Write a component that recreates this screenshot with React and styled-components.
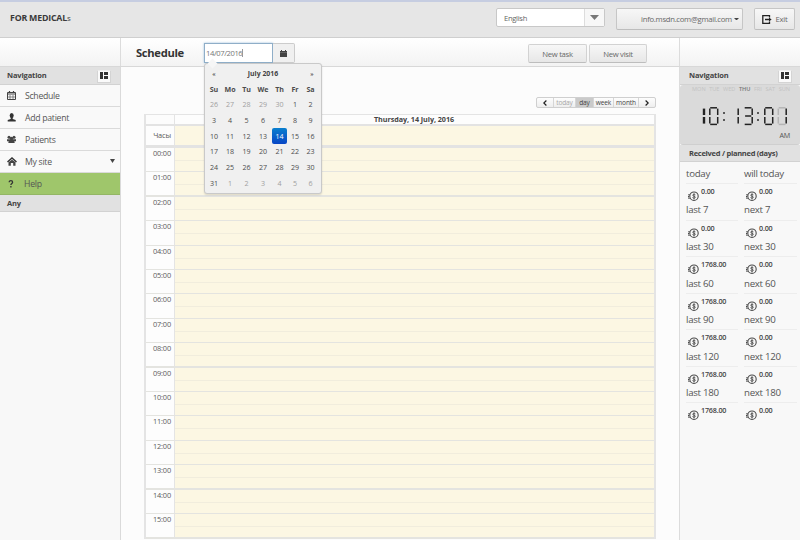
import React from "react";
import styled, { createGlobalStyle } from "styled-components";

const Global = createGlobalStyle`
  * { box-sizing: border-box; }
  html, body { margin: 0; height: 540px; overflow: hidden; }
  body { font-family: "Open Sans", "Noto Sans", sans-serif; color: #4a4a4a; background: #fcfcfc; font-size: 8px; }
`;

const Page = styled.div`
  width: 800px; height: 540px; overflow: hidden;
  display: flex; flex-direction: column;
  border-top: 2px solid #c6cde1;
`;
const TopBar = styled.header`
  height: 36px; flex: none; display: flex; align-items: flex-start;
  background: #e6e6e6;
  border-bottom: 1px solid #cfcfcf;
  padding-left: 10px;
`;
const Brand = styled.h1`
  margin: 10px 0 0; width: 486px; font-size: 8.8px; line-height: 13px; font-weight: 700; color: #3a3a3a;
  letter-spacing: -0.2px;
  small { font-size: 7.8px; font-weight: 600; color: #666; }
`;
const Select = styled.div`
  flex: none; margin-top: 6px; width: 109px; height: 19px; display: flex; align-items: center;
  background: #fff; border: 1px solid #c8c8c8; border-radius: 2px; padding-left: 7px; font-size: 7.6px; color: #666;
  letter-spacing: -0.3px;
`;
const SelectArrow = styled.span`
  margin-left: auto; width: 20px; height: 17px; border-left: 1px solid #ddd;
  display: flex; align-items: center; justify-content: center; background: #f7f7f7;
`;
const Button = styled.button`
  flex: none; font: inherit; font-size: ${p => p.$size || 7.7}px; letter-spacing: -0.28px; color: #686868;
  padding: 0; margin: ${p => p.$margin}; white-space: nowrap;
  width: ${p => p.$w}px; height: ${p => p.$h}px;
  display: flex; align-items: center; justify-content: center; gap: ${p => p.$gap ?? 4}px;
  border: 1px solid ${p => (p.$soft ? "#d2d2d2" : "#c6c6c6")}; border-bottom-color: #bdbdbd; border-radius: 2px;
  background: linear-gradient(#f7f7f7, #e7e7e7);
`;
const Email = styled.span`
  margin-left: 21px;
`;
const SubBar = styled.div`
  height: 29px; flex: none; display: grid; grid-template-columns: 121px 559px 120px;
  background: linear-gradient(#ffffff, #f3f3f3); border-bottom: 1px solid #d8d8d8;
`;
const SubCell = styled.div`
  display: flex; border-right: 1px solid ${p => (p.$last ? "transparent" : "#dcdcdc")};
`;
const Title = styled.h2`
  margin: 7px 0 0 15px; width: 68px; font-size: 11.2px; line-height: 16px; color: #333; letter-spacing: -0.3px;
`;
const DateField = styled.div`
  margin-top: 5px; width: 69px; height: 20px; padding-left: 1px; display: flex; align-items: center;
  border: 1px solid #8faec8; background: #fff; box-shadow: 0 0 2px #9dbfdc; color: #777; font-size: 7.6px;
  letter-spacing: -0.4px;
`;
const Caret = styled.i`
  width: 1px; height: 8px; background: #999;
`;
const DateButton = styled.div`
  margin-top: 5px; width: 22px; height: 20px; display: flex; align-items: center; justify-content: center;
  background: #f0f0f0; border: 1px solid #ccc; border-left: 0; border-radius: 0 2px 2px 0;
`;
const Actions = styled.div`
  margin: 6px 32px 0 auto; display: flex; gap: 2px;
`;
const Body = styled.div`
  flex: 1; min-height: 0; display: grid; grid-template-columns: 121px 559px 120px;
`;
const Side = styled.aside`
  background: #f8f8f8; min-width: 0;
  border-right: ${p => (p.$left ? "1px solid #dadada" : "0")};
`;
const PanelHead = styled.div`
  height: ${p => p.$h}px; padding: 0 ${p => (p.$pad ?? 12)}px 1px ${p => p.$left}px; display: flex; align-items: center; justify-content: space-between;
  background: #e1e1e1; border-bottom: 1px solid #d2d2d2;
  font-size: 7.5px; font-weight: 700; color: #444; letter-spacing: ${p => p.$ls ?? -0.15}px; white-space: nowrap;
`;
const PanelIcon = styled.span`
  width: 14px; height: 13px; margin-top: 2px; display: flex; align-items: center; justify-content: center;
  background: #fafafa; border: 1px solid #d4d4d4; border-top-color: #eee;
`;
const NavItem = styled.a`
  height: 22px; padding: 0 5px 0 7px; display: flex; align-items: center;
  border-bottom: 1px solid ${p => (p.$active ? "#93b664" : "#dadada")};
  background: ${p => (p.$active ? "#9fc66b" : "#f9f9f9")};
  color: #555; font-size: 8.7px; letter-spacing: -0.28px;
`;
const NavIcon = styled.span`
  width: ${p => (p.$narrow ? 17 : 18)}px; display: flex;
`;
const NavArrow = styled.span`
  margin: -2px 0 0 auto; display: flex;
`;
const Main = styled.main`
  border-right: 1px solid #dcdcdc; padding: 30px 23px 0 23px; min-width: 0; overflow: hidden;
`;
const Views = styled.div`
  margin-left: auto; width: 120px; height: 11px; display: flex;
  border: 1px solid #cfcfcf; border-radius: 2px; background: linear-gradient(#fdfdfd, #eeeeee); overflow: hidden;
`;
const View = styled.div`
  width: ${p => p.$w}px; display: flex; align-items: center; justify-content: center;
  border-right: 1px solid #d6d6d6; font-size: 6.6px; letter-spacing: -0.15px; line-height: 8px; color: ${p => (p.$dim ? "#a8a8a8" : "#444")};
  background: ${p => (p.$active ? "#cacaca" : "transparent")};
  &:last-child { border-right: 0; }
`;
const Table = styled.section`
  margin-top: 6px; border: solid #e4e4e4; border-width: 1px 2px 0 2px;
`;
const Row = styled.div`
  display: grid; grid-template-columns: 28px 1fr; height: ${p => p.$h}px;
  border-bottom: ${p => p.$b}px solid #e3e3e3;
`;
const DayHead = styled.div`
  border-left: 1px solid #e4e4e4; background: ${p => (p.$head ? "#fdfdfd" : "#fcf7e3")}; padding-right: 1px;
  text-align: center; font-size: 7.2px; letter-spacing: -0.05px; line-height: 9px; font-weight: 700; color: #444;
`;
const HourLabel = styled.div`
  background: #fdfdfd; text-align: right; padding: ${p => p.$top}px 3px 0 0; font-size: 7.4px; line-height: 10px; color: #5a5a5a;
  letter-spacing: -0.15px; white-space: nowrap;
`;
const HourRow = styled.div`
  display: grid; grid-template-columns: 28px 1fr; height: 24.42px;
  border-bottom: ${p => (p.$strong ? 2 : 1)}px solid #e4e4e0;
`;
const Slot = styled.div`
  border-left: 1px solid #e4e4e4; background: #fcf7e3;
  &::before { content: ""; display: block; height: 12px; border-bottom: 1px solid #f1eddd; }
`;
const Clock = styled.div`
  height: 60px; background: #dadada; border-bottom: 1px solid #cfcfcf; border-radius: 3px; padding: 0 10px 0 12px;
`;
const Weekdays = styled.div`
  display: flex; justify-content: space-between; font-size: 5.6px; line-height: 8px; color: #c3c3c3;
  b { color: #777; font-weight: 600; }
`;
const ClockFace = styled.svg`
  display: block; margin: 14px 0 0 9px;
`;
const Meridiem = styled.div`
  text-align: right; font-size: 7.2px; letter-spacing: -0.2px; line-height: 9px; margin-top: 5px; color: #555;
`;
const Stats = styled.div`
  display: grid; grid-template-columns: 52px 53px; column-gap: 6px; padding: 0 3px 0 6px;
`;
const StatLabel = styled.div`
  height: ${p => (p.$first ? 22 : 17.2)}px; padding-top: ${p => (p.$first ? 5 : 0)}px;
  border-bottom: 1px solid #ededed; font-size: 9.7px; letter-spacing: -0.3px; line-height: 13px; color: #555; white-space: nowrap;
`;
const StatValue = styled.div`
  height: 19.4px; display: flex; align-items: flex-start; padding: 7px 0 0 2px; gap: 2px;
  font-size: 7.2px; line-height: 9px; font-weight: 600; color: #444;
  span { margin-top: -4px; letter-spacing: -0.2px; }
`;
const Popup = styled.div`
  position: absolute; left: 204px; top: 63px; width: 118px; height: 131px; padding: 3px 2px 0;
  background: #f0f0f0; border: 1px solid #c9c9c9; border-radius: 3px; box-shadow: 0 1px 2px #0002;
`;
const Notch = styled.i`
  position: absolute; left: 4px; top: -4px; width: 7px; height: 7px; background: #f6f6f6; transform: rotate(45deg);
`;
const MonthRow = styled.div`
  display: grid; grid-template-columns: 14px 1fr 14px; height: 13px; align-items: center; text-align: center;
  font-size: 6.9px; font-weight: 700; color: #444;
`;
const Step = styled.span`
  font-size: 6px; font-weight: 600;
`;
const Days = styled.div`
  display: grid; grid-template-columns: 14px 18px 15px 18px 15px 16px 15px; grid-auto-rows: 15.65px;
  margin-top: 1px;
`;
const Day = styled.div`
  display: flex; align-items: center; justify-content: center; font-size: 7.1px; letter-spacing: -0.1px; border-radius: 2px;
  font-weight: ${p => (p.$head ? 700 : 400)};
  color: ${p => (p.$selected ? "#fff" : p.$dim ? "#a0a0a0" : "#4c4c4c")};
  background: ${p => (p.$selected ? "linear-gradient(#0a7fce, #0846c6)" : "none")};
`;

const Triangle = ({ w = 9, h = 5, fill = "#777" }) => (
  <svg width={w} height={h} viewBox="0 0 10 6" preserveAspectRatio="none"><path d="M0 0H10L5 6Z" fill={fill} /></svg>
);
const BlocksIcon = () => (
  <svg width="8" height="8" viewBox="0 0 8 8" fill="#333">
    <path d="M0 0h3v7H0zM4 0h4v3H4zM4 4h4v3H4z" />
  </svg>
);
const CalendarIcon = () => (
  <svg width="9" height="9" viewBox="0 0 9 9" fill="none" stroke="#444">
    <path d="M.5 1.5h8v7h-8z" /><path d="M0 3h9M2.5 0v2M6.5 0v2" strokeWidth="1.2" />
    <path d="M3 4v5M6 4v5M1 6h7" strokeWidth=".6" />
  </svg>
);
const PersonIcon = () => (
  <svg width="9" height="9" viewBox="0 0 9 9" fill="#333">
    <ellipse cx="4.7" cy="2.6" rx="2" ry="2.5" /><path d="M3.7 4h2v2l3 1v1.6H.7V7l3-1z" />
  </svg>
);
const GroupIcon = () => (
  <svg width="9" height="9" viewBox="0 0 9 9" fill="#444">
    <circle cx="2" cy="2.3" r="1.5" /><circle cx="7" cy="2.3" r="1.5" /><circle cx="4.5" cy="3.6" r="1.8" />
    <path d="M0 4.2h9v2H0zM1.8 5.5h5.4l.5 2.5H1.3z" />
  </svg>
);
const HouseIcon = () => (
  <svg width="10" height="9" viewBox="0 0 10 9" fill="none" stroke="#333">
    <path d="M.5 5 5 1l4.5 4" strokeWidth="1.5" /><path d="M1.5 5.3 5 2.8l3.5 2.5v3.4H6.2V6H3.8v2.7H1.5z" fill="#444" stroke="none" />
  </svg>
);
const HelpIcon = () => (
  <svg width="8" height="8" viewBox="0 0 8 8" fill="none" stroke="#333" strokeWidth="1.3">
    <path d="M2.2 2.2c0-2 3.4-2 3.4 0C5.6 3.6 3.9 3.3 3.9 5M3.9 6v1.4" />
  </svg>
);
const ExitIcon = () => (
  <svg width="10" height="9" viewBox="0 0 10 9" fill="none" stroke="#222" strokeWidth="1.3">
    <path d="M7.5 2.5V.7H.8v7.6h6.7V6.5M3 4.5h5" /><path d="M7 2.5 9.6 4.5 7 6.5Z" fill="#222" stroke="none" />
  </svg>
);
const CoinIcon = () => (
  <svg width="11" height="11" viewBox="0 0 11 11" fill="none" stroke="#4a4a4a">
    <circle cx="6" cy="5.2" r="4.2" strokeWidth="1.1" /><path d="M1 3v1.4M.6 5v1.4M1 7v1" strokeWidth="1.2" />
    <path d="M7.4 3.8c-.6-.8-2.7-.7-2.7.4s2.7.9 2.7 2-2.1 1.2-2.9.3M6 2.4v5.8" strokeWidth=".9" />
  </svg>
);

const SEGMENTS = {
  a: "M1.2 .8H8", b: "M8.7 1.6V8", c: "M8.7 10V16.6", d: "M1.2 17.4H8",
  e: "M.8 10V16.6", f: "M.8 1.6V8", g: "M1.6 9H7.8",
};
const DIGITS = { 0: "abcdef", 1: "bc", 3: "abcdg" };
const Digit = ({ x, value, ghost, w = 1.5 }) => (
  <g transform={`translate(${x} 0)`} strokeWidth={w}>
    {ghost && [..."adef"].map(s => <path key={s} d={SEGMENTS[s]} stroke="#b5b5b5" />)}
    {[...DIGITS[value]].map(s => <path key={s} d={SEGMENTS[s]} stroke="#222" />)}
  </g>
);

const NAV = [
  ["Schedule", CalendarIcon], ["Add patient", PersonIcon], ["Patients", GroupIcon],
  ["My site", HouseIcon], ["Help", HelpIcon],
];
const STATS = [
  ["today", "will today", "0.00"], ["last 7", "next 7", "0.00"], ["last 30", "next 30", "1768.00"],
  ["last 60", "next 60", "1768.00"], ["last 90", "next 90", "1768.00"],
  ["last 120", "next 120", "1768.00"], ["last 180", "next 180", "1768.00"],
];
const DAYS = [26, 27, 28, 29, 30, ...Array.from({ length: 31 }, (_, i) => i + 1), 1, 2, 3, 4, 5, 6];
const STRONG_AFTER = [1, 8, 13, 15];

export default function App() {
  return (
    <Page>
      <Global />
      <TopBar>
        <Brand>FOR MEDICAL<small>s</small></Brand>
        <Select>English<SelectArrow><Triangle /></SelectArrow></Select>
        <Button $w={127} $h={22} $gap={2} $margin="6px 0 0 11px"><Email>info.msdn.com@gmail.com</Email><Triangle w={5} h={2.5} fill="#444" /></Button>
        <Button $w={41} $h={22} $margin="6px 0 0 11px"><ExitIcon />Exit</Button>
      </TopBar>
      <SubBar>
        <SubCell />
        <SubCell>
          <Title>Schedule</Title>
          <DateField>14/07/2016<Caret /></DateField>
          <DateButton>
            <svg width="7" height="7" viewBox="0 0 7 7"><path d="M0 1h1V0h1v1h3V0h1v1h1v6H0z" fill="#444" /><path d="M0 2.5h7" stroke="#888" strokeWidth=".5" /></svg>
          </DateButton>
          <Actions>
            <Button $soft $w={59} $h={19} $margin="0">New task</Button>
            <Button $soft $w={58} $h={19} $margin="0">New visit</Button>
          </Actions>
        </SubCell>
        <SubCell $last />
      </SubBar>
      <Body>
        <Side $left>
          <PanelHead $h={18} $left={7} $pad={9}>Navigation<PanelIcon><BlocksIcon /></PanelIcon></PanelHead>
          {NAV.map(([name, Icon]) => (
            <NavItem key={name} $active={name === "Help"}>
              <NavIcon $narrow={name === "Help"}><Icon /></NavIcon>{name}
              {name === "My site" && <NavArrow><Triangle w={5} h={4} fill="#444" /></NavArrow>}
            </NavItem>
          ))}
          <PanelHead $h={17} $left={7}>Any</PanelHead>
        </Side>
        <Main>
          <Views>
            <View $w={17}><svg width="4" height="6" viewBox="0 0 4 6"><path d="M3.4.5.8 3l2.6 2.5" fill="none" stroke="#222" strokeWidth="1.2" /></svg></View>
            <View $w={22} $dim>today</View>
            <View $w={18} $active>day</View>
            <View $w={20}>week</View>
            <View $w={25}>month</View>
            <View $w={16}><svg width="4" height="6" viewBox="0 0 4 6"><path d="M.6.5 3.2 3 .6 5.5" fill="none" stroke="#222" strokeWidth="1.2" /></svg></View>
          </Views>
          <Table>
            <Row $h={11} $b={2}><span /><DayHead $head>Thursday, 14 July, 2016</DayHead></Row>
            <Row $h={22} $b={3}><HourLabel $top={4}>Часы</HourLabel><DayHead /></Row>
            {Array.from({ length: 16 }, (_, h) => (
              <HourRow key={h} $strong={STRONG_AFTER.includes(h)}>
                <HourLabel $top={0}>{String(h).padStart(2, "0")}:00</HourLabel><Slot />
              </HourRow>
            ))}
          </Table>
        </Main>
        <Side>
          <PanelHead $h={18} $left={9} $pad={8}>Navigation<PanelIcon><BlocksIcon /></PanelIcon></PanelHead>
          <Clock>
            <Weekdays><span>MON</span><span>TUE</span><span>WED</span><b>THU</b><span>FRI</span><span>SAT</span><span>SUN</span></Weekdays>
            <ClockFace width="88" height="19" viewBox="0 0 88 19" fill="none">
              <Digit x={-5.7} value={1} w={2.4} /><Digit x={8} value={0} />
              <path d="M23 5v2M23 12v2M57 5v2M57 12v2" stroke="#222" strokeWidth="1.4" />
              <Digit x={28.5} value={1} /><Digit x={42.5} value={3} />
              <Digit x={63} value={0} /><Digit x={76.5} value={1} ghost />
            </ClockFace>
            <Meridiem>AM</Meridiem>
          </Clock>
          <PanelHead $h={17} $left={9} $ls={-0.27}>Received / planned (days)</PanelHead>
          <Stats>
            {STATS.map(([past, next, sum], i) => (
              <React.Fragment key={past}>
                <StatLabel $first={!i}>{past}</StatLabel><StatLabel $first={!i}>{next}</StatLabel>
                <StatValue><CoinIcon /><span>{sum}</span></StatValue>
                <StatValue><CoinIcon /><span>0.00</span></StatValue>
              </React.Fragment>
            ))}
          </Stats>
        </Side>
      </Body>
      <Popup>
        <Notch />
        <MonthRow><Step>«</Step><span>July 2016</span><Step>»</Step></MonthRow>
        <Days>
          {["Su", "Mo", "Tu", "We", "Th", "Fr", "Sa"].map(d => <Day key={d} $head>{d}</Day>)}
          {DAYS.map((d, i) => <Day key={i} $dim={i < 5 || i > 35} $selected={i === 18}>{d}</Day>)}
        </Days>
      </Popup>
    </Page>
  );
}
